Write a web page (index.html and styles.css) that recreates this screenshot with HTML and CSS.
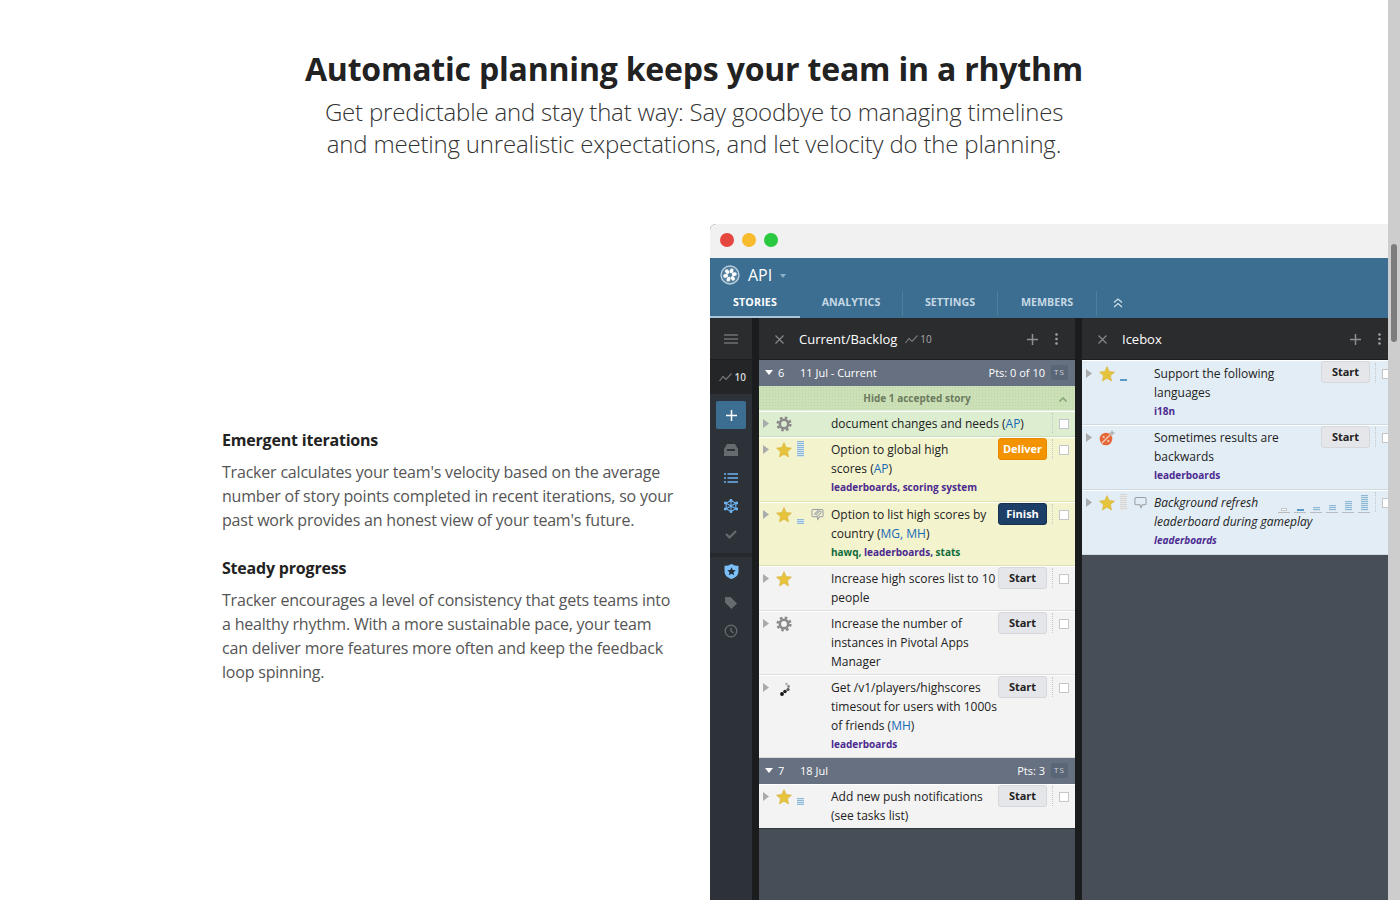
FILE: index.html
```html
<!DOCTYPE html>
<html lang="en">
<head>
<meta charset="utf-8">
<title>Automatic planning</title>
<link rel="stylesheet" href="styles.css">
</head>
<body>
<svg class="defs" width="0" height="0" aria-hidden="true">
  <symbol id="star" viewBox="0 0 16 16"><path d="M8 .6l2.2 4.9 5.3.6-4 3.6 1.1 5.3L8 12.3 3.4 15l1.100-5.300-4-3.600 5.300-.6z" fill="#e5c33c" stroke="#d4ad2c" stroke-width=".5"/></symbol>
  <symbol id="gear" viewBox="0 0 16 16"><circle cx="8" cy="8" r="4.2" fill="none" stroke="#8a8a8a" stroke-width="2.6"/><circle cx="8" cy="8" r="6.4" fill="none" stroke="#8a8a8a" stroke-width="2.4" stroke-dasharray="2.6 2.43"/></symbol>
  <symbol id="tri" viewBox="0 0 6 9"><path d="M0 0l6 4.500L0 9z" fill="#a9abad"/></symbol>
  <symbol id="comment" viewBox="0 0 14 13"><path d="M2.500 1h9A1.500 1.500 0 0 1 13 2.500v5A1.500 1.500 0 0 1 11.500 9H9l-1.500 3-1-3h-4A1.500 1.500 0 0 1 1 7.500v-5A1.500 1.500 0 0 1 2.500 1z" fill="none" stroke="#9a9fa3" stroke-width="1.100"/></symbol>
  <symbol id="trend" viewBox="0 0 13 9"><path d="M.5 8L4 3.500 7 6.500 12.500 .5" fill="none" stroke="#777" stroke-width="1.200"/></symbol>
  <symbol id="plus" viewBox="0 0 11 11"><path d="M5.500 0v11M0 5.500h11" stroke="currentColor" stroke-width="1.500"/></symbol>
  <symbol id="cross" viewBox="0 0 9 9"><path d="M.5 .5l8 8M8.500 .5l-8 8" stroke="#85888a" stroke-width="1.200"/></symbol>
  <symbol id="dots" viewBox="0 0 3 12"><circle cx="1.500" cy="1.500" r="1.300" fill="#a2a4a6"/><circle cx="1.500" cy="6" r="1.300" fill="#a2a4a6"/><circle cx="1.500" cy="10.500" r="1.300" fill="#a2a4a6"/></symbol>
</svg>

<main class="page">
  <header class="hero">
    <h1>Automatic planning keeps your team in a rhythm</h1>
    <p>Get predictable and stay that way: Say goodbye to managing timelines<br>and meeting unrealistic expectations, and let velocity do the planning.</p>
  </header>

  <section class="split">
    <div class="copy">
      <h2>Emergent iterations</h2>
      <p>Tracker calculates your team's velocity based on the average number of story points completed in recent iterations, so your past work provides an honest view of your team's future.</p>
      <h2>Steady progress</h2>
      <p>Tracker encourages a level of consistency that gets teams into a healthy rhythm. With a more sustainable pace, your team can deliver more features more often and keep the feedback loop spinning.</p>
    </div>

    <div class="app">
      <div class="titlebar"><i class="light red"></i><i class="light yellow"></i><i class="light green"></i></div>
      <div class="topbar">
        <div class="project">
          <svg class="logo" viewBox="0 0 20 20"><circle cx="10" cy="10" r="9" fill="#53809f" stroke="#b9cedc" stroke-width="1.400"/><g fill="#fff"><ellipse cx="10" cy="5.600" rx="1.900" ry="2.500" transform="rotate(20 10 10)"/><ellipse cx="10" cy="5.600" rx="1.900" ry="2.500" transform="rotate(80 10 10)"/><ellipse cx="10" cy="5.600" rx="1.900" ry="2.500" transform="rotate(140 10 10)"/><ellipse cx="10" cy="5.600" rx="1.900" ry="2.500" transform="rotate(200 10 10)"/><ellipse cx="10" cy="5.600" rx="1.900" ry="2.500" transform="rotate(260 10 10)"/><ellipse cx="10" cy="5.600" rx="1.900" ry="2.500" transform="rotate(320 10 10)"/></g></svg>
          <span class="project-name">API</span><i class="caret"></i>
        </div>
        <nav class="tabs">
          <a class="tab active t1">STORIES</a>
          <a class="tab t2">ANALYTICS</a>
          <a class="tab t3">SETTINGS</a>
          <a class="tab t4">MEMBERS</a>
          <svg class="collapse" viewBox="0 0 10 10"><path d="M1 4.500L5 1l4 3.500M1 9l4-3.500L9 9" fill="none" stroke="#cfe0ea" stroke-width="1.200"/></svg>
        </nav>
      </div>
      <div class="workspace">
        <aside class="rail">
          <div class="rail-top"><svg class="ic-burger" viewBox="0 0 14 10"><path d="M0 1h14M0 5h14M0 9h14" stroke="#6d7175" stroke-width="1.500"/></svg></div>
          <div class="rail-vel"><svg class="ic-trend"><use href="#trend"/></svg><span>10</span></div>
          <div class="rail-group">
            <button class="add"><svg class="ic-add"><use href="#plus"/></svg></button>
            <svg class="rail-ic first" viewBox="0 0 14 14"><path d="M3 1h8l3 5v7H0V6zM3 6h8v2H3z" fill="#666b70" fill-rule="evenodd"/></svg>
            <svg class="rail-ic" viewBox="0 0 14 14"><path d="M0 3h2M3.500 3H14M0 7h2M3.500 7H14M0 11h2M3.500 11H14" stroke="#6db3f2" stroke-width="1.700"/></svg>
            <svg class="rail-ic" viewBox="0 0 14 14"><g stroke="#6db3f2" stroke-width="1.100" fill="none"><path d="M7 1.500L11.800 4.250V9.750L7 12.500 2.200 9.750V4.250z"/><path d="M7 0v14M1 3.500l12 7M13 3.500l-12 7"/></g><g fill="#6db3f2"><circle cx="7" cy="1.300" r="1.400"/><circle cx="7" cy="12.700" r="1.400"/><circle cx="1.300" cy="4" r="1.400"/><circle cx="12.700" cy="4" r="1.400"/><circle cx="1.300" cy="10" r="1.400"/><circle cx="12.700" cy="10" r="1.400"/></g></svg>
            <svg class="rail-ic" viewBox="0 0 14 14"><path d="M2 7l3.500 3.500L12 4" fill="none" stroke="#666b70" stroke-width="2.200"/></svg>
          </div>
          <div class="rail-rule"></div>
          <div class="rail-group second">
            <svg class="rail-ic shield" viewBox="0 0 14 14"><path d="M7 0c2 1.300 4 1.700 6.500 1.700V7c0 3.500-2.700 5.700-6.500 7C3.200 12.700.5 10.500.5 7V1.700C3 1.700 5 1.300 7 0z" fill="#7cc0f8"/><path d="M7 3l1.200 2.600 2.800.3-2.100 1.900.6 2.800L7 9.200l-2.500 1.400.6-2.800L3 5.900l2.800-.3z" fill="#26303a"/></svg>
            <svg class="rail-ic" viewBox="0 0 14 14"><path d="M1 1h5.500L13 7.500 7.500 13 1 6.500z" fill="#666b70"/></svg>
            <svg class="rail-ic" viewBox="0 0 14 14"><circle cx="7" cy="7" r="5.800" fill="none" stroke="#666b70" stroke-width="1.300"/><path d="M7 3.500V7l2.500 2" fill="none" stroke="#666b70" stroke-width="1.300"/></svg>
          </div>
        </aside>

        <section class="panel backlog">
          <div class="panel-head">
            <svg class="ic-x"><use href="#cross"/></svg>
            <span class="panel-title">Current/Backlog</span>
            <svg class="ic-trend head-trend"><use href="#trend"/></svg><span class="head-vel">10</span>
            <svg class="ic-plus"><use href="#plus"/></svg>
            <svg class="ic-dots"><use href="#dots"/></svg>
          </div>
          <div class="iter"><i class="iter-caret"></i><span class="iter-num">6</span><span class="iter-date">11 Jul - Current</span><span class="iter-pts">Pts: 0 of 10</span><span class="ts">TS</span></div>
          <div class="hide-accepted"><span>Hide 1 accepted story</span><svg class="ic-up" viewBox="0 0 8 5"><path d="M.5 4.500L4 1l3.500 3.500" fill="none" stroke="#87a873" stroke-width="1.600"/></svg></div>

          <article class="row accepted">
            <div class="meta"><svg class="tri"><use href="#tri"/></svg><svg class="type"><use href="#gear"/></svg></div>
            <div class="body"><span class="title">document changes and needs (<b class="who">AP</b>)</span></div>
            <div class="end"><i class="check"></i></div>
          </article>
          <article class="row yellow-row tall">
            <div class="meta"><svg class="tri"><use href="#tri"/></svg><svg class="type"><use href="#star"/></svg><i class="est e8"></i></div>
            <div class="body"><span class="title">Option to global high scores&nbsp;(<b class="who">AP</b>)</span><span class="tags">leaderboards, scoring system</span></div>
            <button class="btn deliver">Deliver</button><div class="end"><i class="check"></i></div>
          </article>
          <article class="row yellow-row">
            <div class="meta"><svg class="tri"><use href="#tri"/></svg><svg class="type"><use href="#star"/></svg><i class="est e2"></i><svg class="cmt" viewBox="0 0 14 13"><use href="#comment"/><path d="M5 7.500L9 3a1.200 1.200 0 0 1 1.800 1.500L6.500 9M3.500 6.500L8 1.800" fill="none" stroke="#a6aaae" stroke-width="1.200"/></svg></div>
            <div class="body"><span class="title">Option to list high scores by country&nbsp;(<b class="who">MG, MH</b>)</span><span class="tags"><em class="grn">hawq,</em> leaderboards, <em class="grn">stats</em></span></div>
            <button class="btn finish">Finish</button><div class="end"><i class="check"></i></div>
          </article>
          <article class="row">
            <div class="meta"><svg class="tri"><use href="#tri"/></svg><svg class="type"><use href="#star"/></svg></div>
            <div class="body"><span class="title">Increase high scores list to 10 people</span></div>
            <button class="btn">Start</button><div class="end"><i class="check"></i></div>
          </article>
          <article class="row">
            <div class="meta"><svg class="tri"><use href="#tri"/></svg><svg class="type"><use href="#gear"/></svg></div>
            <div class="body"><span class="title">Increase the number of instances in Pivotal Apps Manager</span></div>
            <button class="btn">Start</button><div class="end"><i class="check"></i></div>
          </article>
          <article class="row">
            <div class="meta"><svg class="tri"><use href="#tri"/></svg><svg class="type" viewBox="0 0 16 16"><circle cx="6" cy="14" r="1.900" fill="#111"/><circle cx="9" cy="11.500" r="1.800" fill="#222"/><circle cx="12" cy="9.500" r="1.600" fill="#555"/><circle cx="12.500" cy="6.500" r="1.400" fill="#888"/><circle cx="10.500" cy="4" r="1.300" fill="#b0b0b0"/></svg></div>
            <div class="body wide"><span class="title">Get /v1/players/highscores timesout for users with 1000s of friends&nbsp;(<b class="who">MH</b>)</span><span class="tags">leaderboards</span></div>
            <button class="btn">Start</button><div class="end"><i class="check"></i></div>
          </article>
          <div class="iter"><i class="iter-caret"></i><span class="iter-num">7</span><span class="iter-date">18 Jul</span><span class="iter-pts">Pts: 3</span><span class="ts">TS</span></div>
          <article class="row white-row">
            <div class="meta"><svg class="tri"><use href="#tri"/></svg><svg class="type"><use href="#star"/></svg><i class="est e3"></i></div>
            <div class="body"><span class="title">Add new push notifications (see tasks list)</span></div>
            <button class="btn">Start</button><div class="end"><i class="check"></i></div>
          </article>
        </section>

        <section class="panel icebox">
          <div class="panel-head">
            <svg class="ic-x"><use href="#cross"/></svg>
            <span class="panel-title">Icebox</span>
            <svg class="ic-plus"><use href="#plus"/></svg>
            <svg class="ic-dots"><use href="#dots"/></svg>
          </div>
          <article class="row ice-row">
            <div class="meta"><svg class="tri"><use href="#tri"/></svg><svg class="type"><use href="#star"/></svg><i class="est e1"></i></div>
            <div class="body"><span class="title">Support the following languages</span><span class="tags">i18n</span></div>
            <button class="btn">Start</button><div class="end"><i class="check"></i></div>
          </article>
          <article class="row ice-row">
            <div class="meta"><svg class="tri"><use href="#tri"/></svg><svg class="type" viewBox="0 0 16 16"><path d="M13 .5v5M10.500 3h5" stroke="#999" stroke-width="1"/><circle cx="7" cy="9" r="6.300" fill="#e4683a"/><path d="M3 13L11 5" stroke="#f6d4c4" stroke-width="1.100"/><circle cx="4.700" cy="7" r="1.100" fill="#f6d4c4"/><circle cx="9.300" cy="11" r="1.100" fill="#f6d4c4"/></svg></div>
            <div class="body"><span class="title">Sometimes results are backwards</span><span class="tags">leaderboards</span></div>
            <button class="btn">Start</button><div class="end"><i class="check"></i></div>
          </article>
          <article class="row ice-row">
            <div class="meta"><svg class="tri"><use href="#tri"/></svg><svg class="type"><use href="#star"/></svg><i class="est e8 grey"></i><svg class="cmt"><use href="#comment"/></svg></div>
            <div class="body unscheduled"><span class="title">Background refresh leaderboard during gameplay</span><span class="tags">leaderboards</span></div>
            <div class="estimator"><i class="pick"><i class="est p0"></i></i><i class="pick"><i class="est p1"></i></i><i class="pick"><i class="est p2"></i></i><i class="pick"><i class="est p3"></i></i><i class="pick"><i class="est p5"></i></i><i class="pick"><i class="est p8"></i></i></div>
            <div class="end"><i class="check"></i></div>
          </article>
        </section>
      </div>
    </div>
  </section>
</main>
<div class="scrollbar"><i class="thumb"></i></div>
</body>
</html>
```

FILE: styles.css
```css
* { box-sizing: border-box; }
html, body { margin: 0; height: 100%; overflow: hidden; background: #fff; }
body { font-family: "Open Sans", "Liberation Sans", sans-serif; color: #2a2a2a; }
.defs { position: absolute; }
i { display: block; font-style: normal; }

.page { width: 1388px; height: 900px; overflow: hidden; }

.hero { padding-top: 46px; text-align: center; height: 224px; }
.hero h1 { margin: 0 0 4px; font-size: 32px; line-height: 46px; font-weight: 700; letter-spacing: -.2px; color: #222; white-space: nowrap; }
.hero p { margin: 0; font-size: 24px; line-height: 32px; font-weight: 300; letter-spacing: -.19px; color: #333; }

.split { display: flex; padding-left: 222px; }
.copy { width: 458px; margin-right: 30px; padding-top: 204px; flex: none; letter-spacing: -.2px; }
.copy h2 { margin: 0 0 8px; font-size: 16px; line-height: 24px; font-weight: 700; color: #222; }
.copy p { margin: 0 0 24px; font-size: 16px; line-height: 24px; color: #555; }

.app { width: 678px; height: 676px; flex: none; display: flex; flex-direction: column; overflow: hidden; border-radius: 6px 0 0 0; background: #2d3238; }
.titlebar { height: 34px; flex: none; background: #f1f1f1; display: flex; align-items: center; gap: 8px; padding: 0 0 2px 10px; }
.light { width: 14px; height: 14px; border-radius: 50%; }
.red { background: #e5463f; }
.yellow { background: #f8bb2d; }
.green { background: #2ac940; }

.topbar { height: 60px; flex: none; background: #3b6e91; }
.project { height: 33px; display: flex; align-items: center; padding: 0 0 0 10px; }
.logo { width: 20px; height: 20px; margin-right: 8px; }
.project-name { font-size: 16px; color: #fff; line-height: 20px; }
.caret { margin: 3px 0 0 8px; border: 3px solid transparent; border-top: 4px solid #8fb0c6; border-bottom: 0; }
.tabs { height: 27px; display: flex; align-items: flex-start; }
.tab { height: 25px; font-size: 10.700px; font-weight: 700; line-height: 23px; color: #c5d8e4; border-right: 1px solid #4f7f9f; white-space: nowrap; text-align: center; }
.tab.active { height: 27px; letter-spacing: .15px; color: #fff; border-bottom: 2px solid #a9c6da; border-right: 0; }
.t1 { width: 90px; }
.t2 { width: 103px; }
.t3 { width: 95px; }
.t4 { width: 99px; }
.collapse { width: 10px; height: 10px; margin: 7px 0 0 16px; }

.workspace { flex: 1; display: flex; min-height: 0; background: #1b1c1d; }
.rail { width: 42px; flex: none; background: #2d3238; display: flex; flex-direction: column; align-items: center; }
.rail-top { width: 100%; height: 42px; background: #2b2c2e; display: flex; align-items: center; justify-content: center; border-bottom: 1px solid #1d1e1f; }
.ic-burger { width: 14px; height: 10px; }
.rail-vel { width: 100%; height: 34px; background: #232527; display: flex; align-items: center; justify-content: flex-end; gap: 3px; padding-right: 6px; color: #d6d8da; font-size: 10px; font-weight: 600; }
.ic-trend { width: 13px; height: 9px; flex: none; }
.rail-group { display: flex; flex-direction: column; align-items: center; }
.add { width: 30px; height: 28px; margin-top: 7px; padding: 0; border: 0; border-radius: 2px; background: #3b6e91; color: #fff; display: flex; align-items: center; justify-content: center; }
.ic-add { width: 11px; height: 11px; }
.rail-ic { width: 14px; height: 14px; margin-bottom: 14px; }
.rail-ic.first { margin-top: 14px; }
.rail-rule { width: 100%; height: 4px; background: #262a2f; margin-top: -2px; }
.rail-group.second { padding-top: 7px; }
.rail-ic.shield { margin-bottom: 17px; width: 15px; height: 15px; }

.panel { position: relative; display: flex; flex-direction: column; background: #474e57; width: 316px; flex: none; margin-left: 7px; }
.panel-head { height: 42px; flex: none; background: #2b2c2e; display: flex; align-items: center; color: #fff; border-bottom: 1px solid #1d1e1f; padding: 1px 0 0 16px; }
.ic-x { width: 9px; height: 9px; margin-right: 15px; flex: none; }
.panel-title { font-size: 13px; line-height: 20px; color: #fff; }
.head-trend { margin-left: 8px; }
.head-vel { font-size: 10px; color: #a8aaac; margin-left: 2px; }
.ic-plus { width: 11px; height: 11px; color: #8d8f91; margin-left: auto; flex: none; }
.ic-dots { width: 3px; height: 12px; margin: 0 17px; flex: none; }

.iter { height: 26px; flex: none; background: #667080; color: #fff; display: flex; align-items: center; font-size: 11px; padding: 0 0 2px 6px; }
.iter-caret { border: 4px solid transparent; border-top: 5px solid #fff; border-bottom: 0; margin-top: 1px; }
.iter-num { margin-left: 5px; width: 22px; }
.iter-pts { margin-left: auto; }
.ts { width: 17px; height: 15px; margin: 1px 7px 0 6px; font-size: 8px; line-height: 14px; letter-spacing: 1px; text-align: center; border-radius: 2px; background: #5a6677; color: #cfd3d9; }

.hide-accepted { height: 25px; flex: none; display: flex; align-items: center; justify-content: center; position: relative; font-size: 10px; font-weight: 700; color: #6c7a60; background-color: #cbe0b6; background-image: radial-gradient(#bcd3a5 35%, transparent 40%); background-size: 3px 3px; border-bottom: 1px solid #e4efd9; }
.ic-up { position: absolute; right: 8px; top: 11px; width: 8px; height: 5px; }

.row { display: flex; align-items: flex-start; flex: none; padding: 3px 0; background: #f3f3f3; border-bottom: 1px solid #dcdcdc; box-shadow: inset 0 1px 0 #fff; }
.accepted { background: #dcedd0; border-bottom-color: #c9dcbc; }
.yellow-row { background: #f3f3cd; border-bottom-color: #e0e0b8; }
.tall { min-height: 65px; }
.white-row { border-bottom-color: #33383e; }
.ice-row { background: #e3edf5; border-bottom-color: #cfd9e0; min-height: 65px; }
.panel-head + .ice-row { padding-top: 4px; }
.panel-head + .ice-row .btn { margin-top: -3px; }

.meta { width: 72px; height: 19px; flex: none; display: flex; align-items: center; padding-left: 4px; position: relative; }
.tri { width: 6px; height: 9px; flex: none; }
.type { width: 16px; height: 16px; margin: 0 0 0 7px; flex: none; }
.cmt { position: absolute; left: 52px; top: 3px; width: 13px; height: 13px; }
.est { width: 7px; flex: none; background: repeating-linear-gradient(to bottom, #8db9d6 0 1px, #d4e4ee 1px 2px); }
.meta > .est { position: absolute; left: 38px; }
.e8 { height: 16px; top: 1px; }
.e2 { height: 5px; top: 14px; }
.e3 { height: 7px; top: 11px; }
.e1 { height: 2px; top: 15px; background: #5b9bc8; }
.grey { background: repeating-linear-gradient(to bottom, #d3d5d7 0 1px, #e8eaec 1px 2px); }

.body { flex: 1; min-width: 0; font-size: 12px; line-height: 19px; color: #222; display: flex; flex-direction: column; }
.wide { margin-right: -3px; }
.title { display: block; }
.who { font-weight: 400; color: #1a6ab5; }
.tags { font-size: 10px; font-weight: 700; color: #4b2a90; line-height: 19px; }
.grn { font-style: normal; color: #0f6b3b; }
.unscheduled { font-style: italic; margin-right: -92px; }
.unscheduled .title { width: 170px; }

.btn { width: 49px; height: 22px; flex: none; margin: -2px 0 0 2px; padding: 0; border: 1px solid #d5d7da; border-radius: 3px; background: #e5e6e9; font: 700 11px/18px "Open Sans", "Liberation Sans", sans-serif; color: #222; }
.deliver { background: #f39300; border-color: #e58a00; color: #fff; }
.finish { background: #1d3e66; border-color: #16314f; color: #fff; }
.end { width: 28px; height: 19px; flex: none; display: flex; align-items: center; padding-left: 12px; position: relative; }
.end::before { content: ""; position: absolute; left: 5px; top: -1px; height: 20px; border-left: 1px dotted #c5c8ca; }
.check { width: 10px; height: 10px; background: #fff; border: 1px solid #c4c6c8; }

.estimator { display: flex; gap: 4px; width: 92px; height: 19px; flex: none; align-items: flex-end; margin-top: 1px; }
.pick { width: 12px; display: flex; justify-content: center; align-items: flex-end; height: 19px; border-bottom: 1px solid #b8bcc0; padding-bottom: 1px; }
.p0 { height: 3px; width: 6px; border: 1px solid #c5c8ca; background: #fff; }
.p1 { height: 2px; background: #5b9bc8; }
.p2 { height: 4px; }
.p3 { height: 6px; }
.p5 { height: 10px; }
.p8 { height: 16px; }

.scrollbar { position: fixed; top: 0; right: 0; width: 12px; height: 900px; background: #cdcdcd; }
.thumb { position: absolute; left: 3px; top: 244px; width: 6px; height: 98px; border-radius: 3px; background: #7d7d7d; }
```
